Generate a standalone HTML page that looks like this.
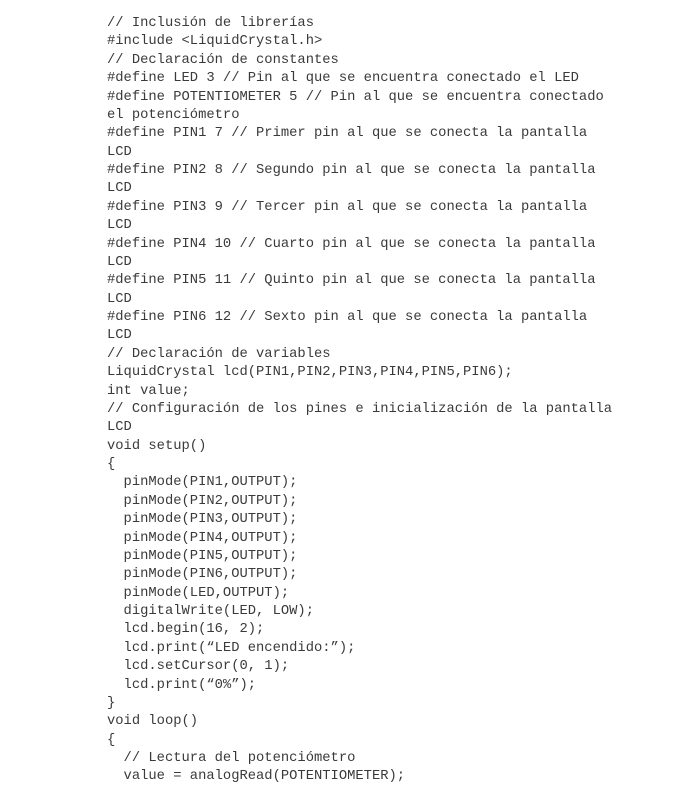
<!DOCTYPE html>
<html><head><meta charset="utf-8"><style>
html,body{margin:0;padding:0;background:#fff;width:679px;height:798px;overflow:hidden}
pre{position:absolute;left:107px;top:15px;margin:0;font-family:"Liberation Mono",monospace;font-size:13.8px;line-height:18.37px;color:#3a3a3a}
</style></head><body><pre>// Inclusión de librerías
#include &lt;LiquidCrystal.h&gt;
// Declaración de constantes
#define LED 3 // Pin al que se encuentra conectado el LED
#define POTENTIOMETER 5 // Pin al que se encuentra conectado
el potenciómetro
#define PIN1 7 // Primer pin al que se conecta la pantalla
LCD
#define PIN2 8 // Segundo pin al que se conecta la pantalla
LCD
#define PIN3 9 // Tercer pin al que se conecta la pantalla
LCD
#define PIN4 10 // Cuarto pin al que se conecta la pantalla
LCD
#define PIN5 11 // Quinto pin al que se conecta la pantalla
LCD
#define PIN6 12 // Sexto pin al que se conecta la pantalla
LCD
// Declaración de variables
LiquidCrystal lcd(PIN1,PIN2,PIN3,PIN4,PIN5,PIN6);
int value;
// Configuración de los pines e inicialización de la pantalla
LCD
void setup()
{
  pinMode(PIN1,OUTPUT);
  pinMode(PIN2,OUTPUT);
  pinMode(PIN3,OUTPUT);
  pinMode(PIN4,OUTPUT);
  pinMode(PIN5,OUTPUT);
  pinMode(PIN6,OUTPUT);
  pinMode(LED,OUTPUT);
  digitalWrite(LED, LOW);
  lcd.begin(16, 2);
  lcd.print(“LED encendido:”);
  lcd.setCursor(0, 1);
  lcd.print(“0%”);
}
void loop()
{
  // Lectura del potenciómetro
  value = analogRead(POTENTIOMETER);</pre></body></html>
